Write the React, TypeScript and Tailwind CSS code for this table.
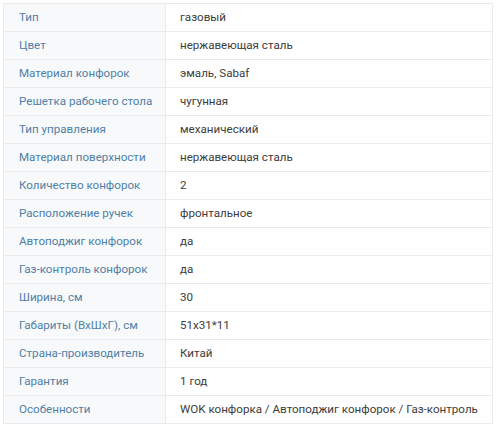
const rows: [string, string][] = [
  ["Тип", "газовый"],
  ["Цвет", "нержавеющая сталь"],
  ["Материал конфорок", "эмаль, Sabaf"],
  ["Решетка рабочего стола", "чугунная"],
  ["Тип управления", "механический"],
  ["Материал поверхности", "нержавеющая сталь"],
  ["Количество конфорок", "2"],
  ["Расположение ручек", "фронтальное"],
  ["Автоподжиг конфорок", "да"],
  ["Газ-контроль конфорок", "да"],
  ["Ширина, см", "30"],
  ["Габариты (ВхШхГ), см", "51х31*11"],
  ["Страна-производитель", "Китай"],
  ["Гарантия", "1 год"],
  ["Особенности", "WOK конфорка / Автоподжиг конфорок / Газ-контроль"],
];

export default function App() {
  return (
    <div className="bg-white px-[3px] pt-[3px] font-['Roboto',sans-serif] text-[11.6px] leading-[27px]">
      <table className="w-[490px] border-collapse border border-[#ebebeb]">
        <tbody>
          {rows.map(([label, value]) => (
            <tr key={label} className="h-[28px] border-b border-[#ebebeb]">
              <td className="w-[162px] whitespace-nowrap border-r border-[#ebebeb] bg-[#f8f9fa] pl-[15px] text-[#4e80a8]">
                {label}
              </td>
              <td className="whitespace-nowrap pl-[14px] text-[#3c3c3c]">{value}</td>
            </tr>
          ))}
        </tbody>
      </table>
    </div>
  );
}
